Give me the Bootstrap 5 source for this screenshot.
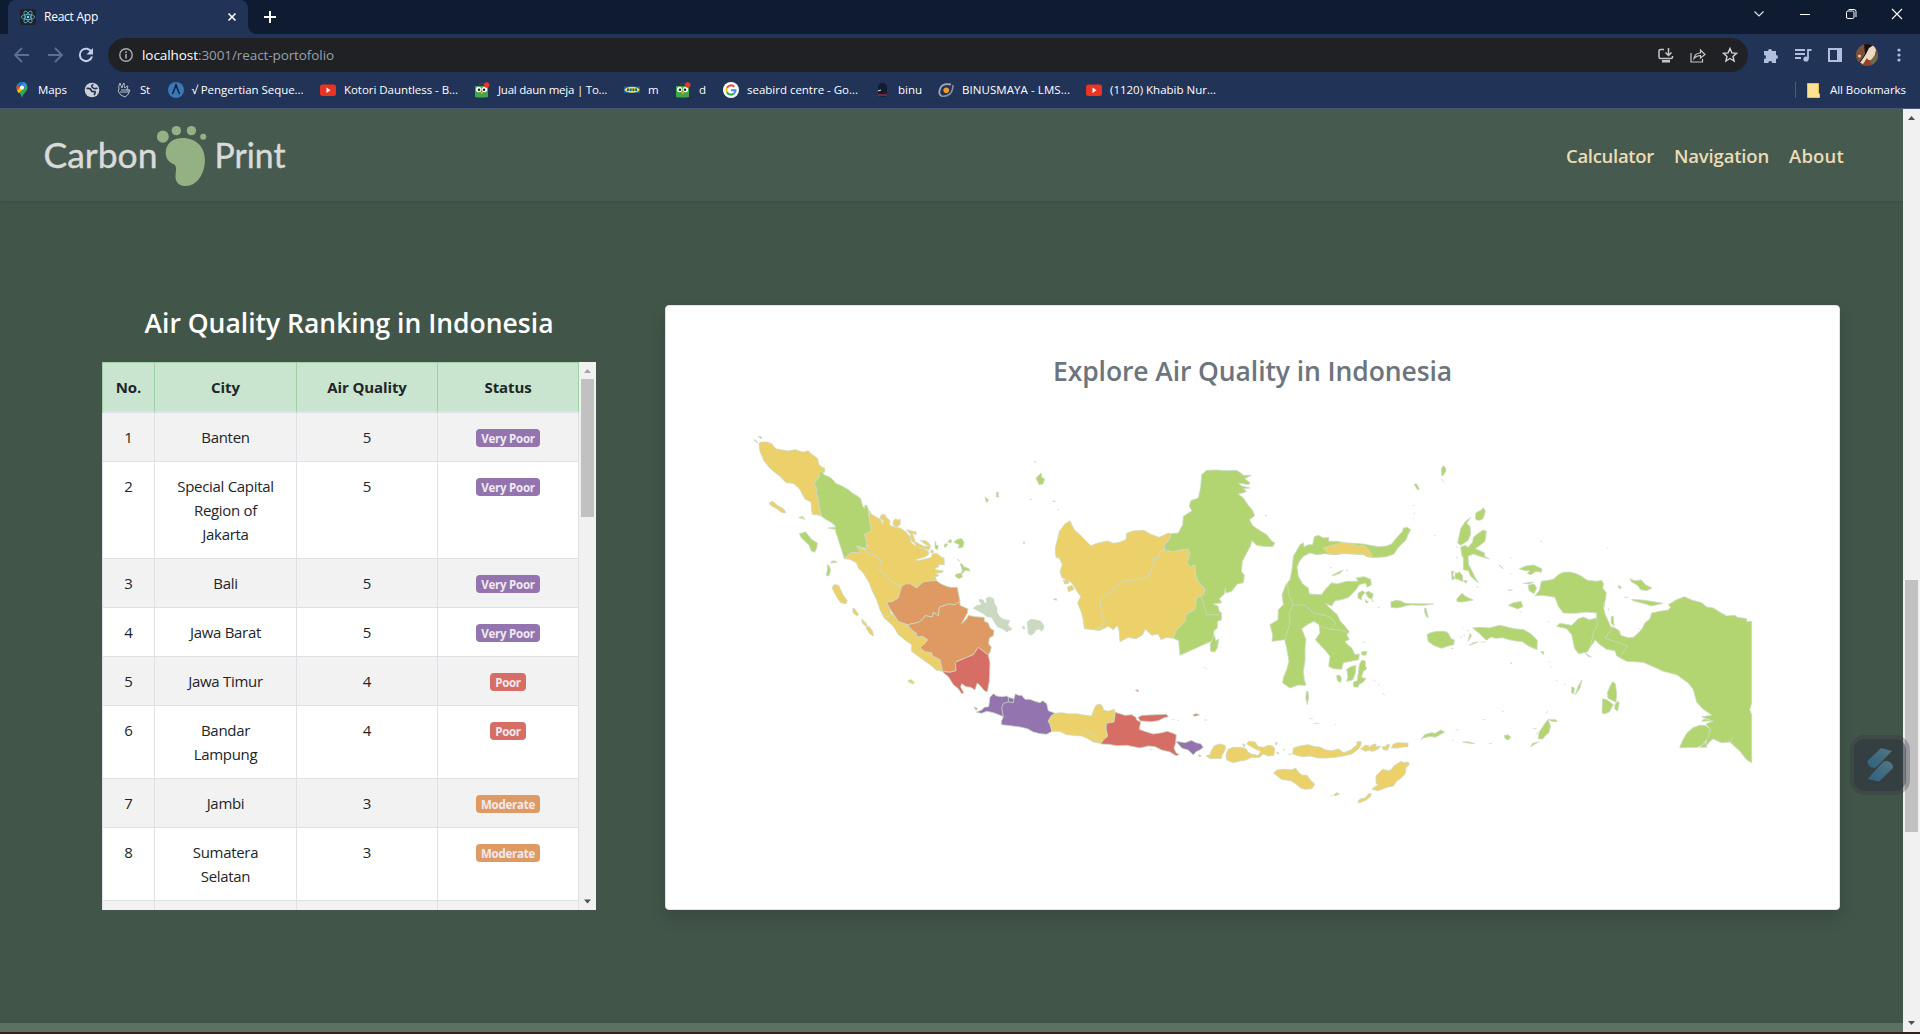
<!DOCTYPE html>
<html lang="en">
<head>
<meta charset="utf-8">
<meta name="viewport" content="width=device-width, initial-scale=1">
<title>React App</title>
<link rel="stylesheet" href="https://cdn.jsdelivr.net/npm/bootstrap@5.3.0/dist/css/bootstrap.min.css">
<script src="https://cdn.jsdelivr.net/npm/bootstrap@5.3.0/dist/js/bootstrap.bundle.min.js"></script>
<style>
body{font-family:"Open Sans","Noto Sans",sans-serif;height:1034px;overflow:hidden;background:#425549;color:#212529}
svg{display:block;flex:none}
[data-w]{white-space:nowrap;display:inline-block;flex:none}
.tabstrip{height:34px;background:#0f1b31;padding-left:8px}
.tab-on{width:240px;height:34px;background:#223358;border-radius:8px 8px 0 0;color:#fff;font-size:12px;padding:0 11px 0 12px}
.corner{width:8px;height:8px;background:radial-gradient(circle at 100% 0,#0f1b31 7.5px,#223358 8px)}
.win{padding-right:17px;gap:30px;height:28px}
.toolbar{height:38px;background:#223358;padding:4px 0 0 13px}
.reload{margin-left:13px}
.omni{width:1640px;height:34px;background:#202124;border-radius:17px;padding:0 10px 0 11px;margin-left:14px;color:#fff;font-size:13.5px}
.omni .dim{color:#9aa0a6}
.host{margin-left:9px}
.avatar{width:22px;height:22px;border-radius:50%;overflow:hidden;margin-left:14px}
.kebab{margin-left:19px}
.marks{height:37px;background:#223358;border-bottom:1px solid #4a577c;color:#fff;font-size:11.5px}
.marks .item{height:35px;flex:none}
.marks .ico{flex:none;width:16px}
.marks .sep{width:1px;height:16px;background:#4c5b80}
.folder{margin-left:11px}
.allmarks{margin:0 14px 0 10px}
.topnav{height:92px;background:#475a4f;box-shadow:0 1px 3px rgba(0,0,0,.12);padding:2px 59px 0 44px;gap:20px}
.topnav a{color:#ecdcb5;font-weight:600;font-size:18.5px;text-decoration:none}
.topnav svg{margin-top:-2px}
.content{padding:104px 63px 0 102px}
.rank{width:494px;padding-top:1px}
.page-title{font-size:26.5px;font-weight:600;line-height:34px}
.tablewrap{height:548px;overflow:hidden;margin-top:22px;background:#f1f1f1}
.rank-table{width:477px;table-layout:fixed;border-collapse:separate;border-spacing:0;border-left:1px solid #dee2e6;margin:0;font-size:15px;line-height:24px;text-align:center;background:#fff;color:#212529}
.rank-table td,.rank-table th{padding:12px;border:0 solid #dee2e6;border-width:0 1px 1px 0;letter-spacing:-.3px;vertical-align:top}
.rank-table th{background:#c9e5cf;border-color:#9fd0a6;border-top-width:1px;border-bottom:2px solid #dee2e6;padding:12px 4px;letter-spacing:-.1px}
.rank-table th:first-child{box-shadow:-1px 0 #9fd0a6}
.rank-table tr:nth-child(odd) td{background:#f2f2f2}
.pill{display:inline-block;height:18px;border-radius:4px;font-size:11.5px;font-weight:700;line-height:19px;color:#efeaf0;vertical-align:top;margin-top:4px;letter-spacing:-.25px;white-space:nowrap}
.vp{background:#9374ae;width:64px}.po{background:#d66e66;width:36px}.mo{background:#df9962;width:64px}
.vbar{width:17px;background:#f1f1f1}
.thumb{width:13px;background:#c1c1c1}
.thumb-list{height:138px}
.thumb-page{height:252px;margin-top:454px}
.mapcard{width:1175px;height:605px;border-radius:4px;border:1px solid #dfe3e0;box-shadow:0 8px 16px rgba(0,0,0,.15);color:#6c757d;padding-top:48px}
.map{margin-top:40px}
.map path{stroke:#cbd9c3;stroke-width:.8;vector-effect:non-scaling-stroke;stroke-linejoin:round}
.gy{fill:#ecd16a}.gg{fill:#b2d571}.go{fill:#df9962}.gr{fill:#d66e66}.gp{fill:#9374ae}.gn{fill:#cbd9c3}
.floater{position:absolute;left:1850px;top:735px;width:60px;height:60px;border-radius:15px;background:rgba(52,48,68,.3)}
.floater .core{width:52px;height:52px;border-radius:11px;background:rgba(40,52,60,.45)}
.floater svg{opacity:.85}
.foot{height:9px;background:#5b7261}
.edge{height:2px;background:#33221f}
</style>
</head>
<body class="d-flex flex-column">
<header class="flex-shrink-0">
 <div class="tabstrip d-flex">
  <div class="tab-on d-flex align-items-center">
   <svg width="16" height="16" viewBox="0 0 16 16"><rect width="16" height="16" rx="2" fill="#20232a"/><g fill="none" stroke="#61b9d0" stroke-width=".8"><ellipse cx="8" cy="8" rx="6.6" ry="2.6"/><ellipse cx="8" cy="8" rx="6.6" ry="2.6" transform="rotate(60 8 8)"/><ellipse cx="8" cy="8" rx="6.6" ry="2.6" transform="rotate(120 8 8)"/></g><circle cx="8" cy="8" r="1.3" fill="#61dafb"/></svg>
   <span class="ms-2" data-w="54">React App</span>
   <svg class="ms-auto" width="10" height="10" viewBox="0 0 10 10"><path d="M1.5 1.5l7 7M8.5 1.5l-7 7" stroke="#fff" stroke-width="1.6"/></svg>
  </div>
  <div class="corner align-self-end"></div>
  <svg class="align-self-center ms-2" width="12" height="12" viewBox="0 0 12 12"><path d="M6 0v12M0 6h12" stroke="#fff" stroke-width="2"/></svg>
  <div class="win d-flex align-items-center ms-auto">
   <svg width="12" height="8" viewBox="0 0 12 8"><path d="M1.5 1.5L6 6l4.500-4.500" fill="none" stroke="#e0e3ea" stroke-width="1.2"/></svg>
   <svg class="ms-1" width="12" height="8" viewBox="0 0 12 8"><path d="M1 4.500h10" stroke="#fff"/></svg>
   <svg class="ms-1" width="12" height="12" viewBox="0 0 12 12"><rect x="1.500" y="3" width="7.500" height="7.500" rx="1.500" fill="none" stroke="#fff"/><path d="M3.500 1.500h5.500q2 0 2 2v5.500" fill="none" stroke="#fff"/></svg>
   <svg class="ms-1" width="12" height="12" viewBox="0 0 12 12"><path d="M1 1l10 10M11 1L1 11" stroke="#fff" stroke-width="1.100"/></svg>
  </div>
 </div>
 <div class="toolbar d-flex align-items-center">
  <svg width="18" height="16" viewBox="0 0 18 16"><path d="M9 1L2 8l7 7M2 8h14" fill="none" stroke="#5e6e94" stroke-width="1.800"/></svg>
  <svg width="18" height="16" viewBox="0 0 18 16" class="ms-3"><path d="M8 1l7 7-7 7M15 8H1" fill="none" stroke="#5e6e94" stroke-width="1.800"/></svg>
  <svg width="16" height="16" viewBox="0 0 16 16" class="reload"><path d="M13.500 5A6.200 6.200 0 1 0 14 9.500" fill="none" stroke="#c1cfea" stroke-width="2"/><path d="M15 1v6.500H8.500z" fill="#c1cfea"/></svg>
  <div class="omni d-flex align-items-center">
   <svg width="14" height="14" viewBox="0 0 14 14"><circle cx="7" cy="7" r="6.200" fill="none" stroke="#a9adb2" stroke-width="1.400"/><path d="M7 6v4.500M7 3.300v1.600" stroke="#a9adb2" stroke-width="1.600"/></svg>
   <span data-w="56" class="host">localhost</span><span class="dim" data-w="136">:3001/react-portofolio</span>
   <svg class="ms-auto" width="16" height="15" viewBox="0 0 16 15"><g fill="none" stroke="#c4c7c5" stroke-width="1.500"><path d="M6 1.500H2.500q-1.500 0-1.500 1.500v6q0 1.500 1.500 1.500h10.500q1.500 0 1.500-1.500V8M10.500 0v7M7.500 4.500l3 3 3-3"/></g><path d="M4 12h8v2.500H4z" fill="#c4c7c5"/></svg>
   <svg class="ms-3" width="16" height="15" viewBox="0 0 16 15"><path d="M1 5v9h11.500v-3M4 10.500c.5-4 3-5.500 6.500-5.500V2L15 6.500 10.500 10V7.500C8 7.500 6 8 4 10.500z" fill="none" stroke="#c4c7c5" stroke-width="1.200"/></svg>
   <svg class="ms-3" width="16" height="16" viewBox="0 0 16 16"><path d="M8 1.500l1.900 4.400 4.700.4-3.600 3.100 1.100 4.600L8 11.500 3.900 14 5 9.400 1.400 6.300l4.700-.4z" fill="none" stroke="#d0d3d6" stroke-width="1.400"/></svg>
  </div>
  <svg class="ms-3" width="14" height="15" viewBox="0 0 14 15" fill="#b0bfdd"><path d="M0 3h4a2 2 0 1 1 4 0h4v4a2 2 0 1 1 0 4v4H8.300a2 2 0 0 0-4 0H0v-4a2 2 0 0 0 0-4z"/></svg>
  <svg class="ms-3" width="18" height="14" viewBox="0 0 18 14"><path d="M1 2h10M1 6h10M1 10h6M14 11V2h3.500" fill="none" stroke="#b0bfdd" stroke-width="1.800"/><circle cx="12" cy="11" r="2.600" fill="#b0bfdd"/></svg>
  <svg class="ms-3" width="14" height="14" viewBox="0 0 14 14"><path d="M1 1h12v12H1z" fill="none" stroke="#b0bfdd" stroke-width="2"/><path d="M9 1h4v12H9z" fill="#b0bfdd"/></svg>
  <svg class="avatar" width="22" height="22" viewBox="0 0 22 22"><path fill="#7d5138" d="M0 0h22v22H0z"/><path fill="#18120f" d="M8 0h8l-1 6-7 10-4 6H1l8-12z"/><path fill="#ead9c4" d="M13 4l5-3 2 5-2 8-5 3-2-3-4 6-3-1 6-9z"/><path fill="#a33a22" d="M10 16l4 0-2 6H9z"/><path fill="#6f6a4a" d="M18 12l4-2v8l-5 3-3-3z"/><circle cx="3.500" cy="12" r="1.600" fill="#d8c5ac"/></svg>
  <svg class="kebab" width="4" height="14" viewBox="0 0 4 14" fill="#b0bfdd"><circle cx="2" cy="2" r="1.600"/><circle cx="2" cy="7" r="1.600"/><circle cx="2" cy="12" r="1.600"/></svg>
 </div>
 <div class="marks d-flex align-items-center" id="marks"></div>
</header>

<div class="d-flex flex-grow-1">
 <main class="flex-grow-1 d-flex flex-column">
  <nav class="topnav d-flex align-items-center">
   <svg class="me-auto" width="245" height="66" viewBox="44 122 245 66">
    <g font-family="Lato,sans-serif" font-size="34.500" fill="#d9dad9" stroke="#d9dad9" stroke-width=".4"><text x="43.500" y="168" textLength="114" lengthAdjust="spacingAndGlyphs">Carbon</text><text x="214.500" y="168" textLength="71" lengthAdjust="spacingAndGlyphs">Print</text></g>
    <g fill="#94b183" transform="scale(.40816 .33333)"><ellipse cx="399" cy="410" rx="14.500" ry="18.500"/><ellipse cx="432" cy="392" rx="11.500" ry="14"/><ellipse cx="469" cy="392" rx="11.500" ry="14"/><ellipse cx="498" cy="410" rx="7.500" ry="9"/><path d="M447 414C480 414 502 440 502 480C502 522 482 558 455 558C438 558 430 545 430 530C430 515 435 500 426 493C414 487 406 475 406 458C406 432 423 414 447 414Z"/></g>
   </svg>
   <a href="#" data-w="88">Calculator</a><a href="#" data-w="95">Navigation</a><a href="#" data-w="55">About</a>
  </nav>
  <div class="content d-flex justify-content-between flex-grow-1">
   <section class="rank">
    <h1 class="page-title text-white text-center mb-0"><span data-w="409">Air Quality Ranking in Indonesia</span></h1>
    <div class="tablewrap d-flex">
     <div>
     <table class="rank-table">
      <colgroup><col style="width:52px"><col style="width:142px"><col style="width:141px"><col style="width:141px"></colgroup>
      <thead><tr><th>No.</th><th>City</th><th>Air Quality</th><th>Status</th></tr></thead>
      <tbody>
       <tr><td>1</td><td>Banten</td><td>5</td><td><span class="pill vp">Very Poor</span></td></tr>
       <tr><td>2</td><td>Special Capital<br>Region of<br>Jakarta</td><td>5</td><td><span class="pill vp">Very Poor</span></td></tr>
       <tr><td>3</td><td>Bali</td><td>5</td><td><span class="pill vp">Very Poor</span></td></tr>
       <tr><td>4</td><td>Jawa Barat</td><td>5</td><td><span class="pill vp">Very Poor</span></td></tr>
       <tr><td>5</td><td>Jawa Timur</td><td>4</td><td><span class="pill po">Poor</span></td></tr>
       <tr><td>6</td><td>Bandar<br>Lampung</td><td>4</td><td><span class="pill po">Poor</span></td></tr>
       <tr><td>7</td><td>Jambi</td><td>3</td><td><span class="pill mo">Moderate</span></td></tr>
       <tr><td>8</td><td>Sumatera<br>Selatan</td><td>3</td><td><span class="pill mo">Moderate</span></td></tr>
       <tr><td>&nbsp;</td><td></td><td></td><td></td></tr>
      </tbody>
     </table>
     </div>
     <div class="vbar d-flex flex-column align-items-center">
      <svg width="17" height="17" viewBox="0 0 17 17"><path d="M5 11l3.500-4 3.500 4z" fill="#a3a3a3"/></svg>
      <div class="thumb thumb-list"></div>
      <svg class="mt-auto" width="17" height="17" viewBox="0 0 17 17"><path d="M5 6.500l3.500 4 3.500-4z" fill="#505050"/></svg>
     </div>
    </div>
   </section>
   <section class="mapcard bg-white d-flex flex-column align-items-center">
    <h2 class="page-title mb-0"><span data-w="399">Explore Air Quality in Indonesia</span></h2>
    <svg class="map" width="1015" height="380" viewBox="745 430 1015 380">
     <g transform="translate(740 420) scale(.33333)">
      <path class="gy" d="M57 76L66 72 82 72 95 77 103 88 110 93 128 96 145 99 165 95 178 99 190 103 205 98 213 107 220 112 228 118 233 122 237 140 245 147 255 152 253 163 240 160 236 180 222 196 232 215 229 225 235 240 237 262 245 295 232 290 218 290 215 278 213 252 195 243 188 230 180 215 172 206 160 196 138 194 120 175 100 160 86 146 72 128 64 110 60 100Z"/>
      <path class="gg" d="M240 160L246 160 252 170 270 178 280 187 287 196 310 206 325 215 338 226 352 234 362 242 368 265 374 272 374 262 380 262 385 275 388 305 395 338 373 350 381 375 379 392 350 384 362 405 345 403 330 405 313 422 308 405 300 380 292 355 288 345 285 322 276 315 268 310 255 303 245 295 237 262 235 240 229 225 232 215 222 196 236 180Z"/>
      <path class="gy" d="M388 278L396 290 410 298 422 304 428 320 430 308 420 300 424 290 435 290 440 300 450 308 449 322 465 328 480 330 495 340 505 350 512 358 512 372 530 388 550 392 565 400 567 408 555 417 525 425 535 428 560 422 575 418 577 408 590 406 605 418 612 420 613 440 595 439 597 446 586 449 585 455 610 459 606 464 585 466 598 473 586 476 590 488 570 489 550 492 530 510 510 497 485 505 460 495 440 475 415 450 422 425 398 410 385 412 375 395 379 392 381 375 373 350 395 338 388 305Z"/>
      <path class="gy" d="M461 308l6 -6 5 4 8 -2 1 14 -8 8 -9 -1 -6 -8zM499 335l29 7 1 8 -12 -4 7 20 2 12 -12 -10 -3 -20zM527 372l22 12 22 2 -4 10 -20 -6 -20 -2zM541 368l16 0 10 8 5 10 -14 -6zM573 395l7 3 0 7 -8 -1z"/>
      <path class="gy" d="M313 422L330 405 345 403 362 405 350 384 375 395 385 412 398 410 422 425 421 440 415 450 440 475 460 495 485 505 475 540 455 552 440 552 455 590 433 600 420 575 410 545 395 515 390 500 385 490 370 465 355 450 350 435 330 424Z"/>
      <path class="gy" d="M433 600L460 588 475 610 500 620 515 630 520 640 530 647 530 656 548 655 563 665 558 673 540 690 555 701 575 704 577 713 600 725 608 760 590 757 570 740 545 722 515 700 515 680 498 668 475 650 460 625Z"/>
      <path class="go" d="M485 505L497 498 510 497 530 510 550 492 570 489 590 488 602 497 615 503 630 508 652 508 656 530 660 550 645 560 625 558 598 568 595 594 584 585 580 583 577 597 555 593 550 602 535 613 503 620 475 610 460 588 448 570 440 552 455 552 475 540Z"/>
      <path class="go" d="M503 620L535 613 550 602 555 593 577 597 580 583 595 594 598 568 625 558 645 560 660 550 660 562 684 573 682 585 674 600 665 617 680 602 685 592 705 596 733 598 733 610 745 615 750 630 762 638 760 653 748 660 746 678 754 688 750 703 745 711 730 700 715 688 700 710 680 718 650 730 648 758 630 763 608 760 600 725 577 713 575 704 555 701 540 690 558 673 563 665 548 655 530 656 530 647 515 635Z"/>
      <path class="gr" d="M606 760L630 763 648 758 646 733 680 718 700 710 715 688 730 700 745 711 750 735 748 790 742 822 733 818 722 805 712 795 705 816 692 808 678 806 665 797 662 807 672 826 664 826 655 812 640 800 625 776Z"/>
      <path class="gn" d="M700 571l10 -8 18 -4 -10 -8 0 -8 12 4 3 8 8 0 -2 -14 10 -4 12 6 2 14 8 12 0 15 8 12 10 8 20 4 -6 12 10 12 -12 10 -10 -8 -18 -8 -10 -14 -8 -14 -14 -2 -12 -10zM862 612l10 -8 16 2 14 4 7 8 3 12 -8 10 -5 -7 -12 2 -4 10 -10 6 -8 -4zM848 624l5 2 1 6 -5 0zM810 630l5 2 -4 6z"/>
      <path class="gy" d="M88 254l10 -4 14 12 18 10 8 12 -12 0 -16 -12 -18 -10zM176 299l12 -4 6 9 -6 -2zM276 510l6 -10 14 2 6 14 8 16 12 16 -4 9 -16 -3 -10 -14zM338 572l6 0 12 18 -6 3 -10 -8zM365 604l12 10 4 8 -6 2 -8 -10zM380 624l8 2 10 14 2 14 -10 -6 -12 -18zM505 787l8 -2 10 8 -4 5 -13 -6zM42 65l8 4 3 5 -6 -3zM55 55l9 1 1 6 -6 -2z"/>
      <path class="gg" d="M178 347l10 -2 8 -4 8 10 12 14 16 10 -2 16 -6 12 -10 -4 -6 -16 -14 -14 -10 -10zM264 330l22 -2 0 6zM272 432l10 -4 10 4 -18 3zM262 440l6 4 4 14 -6 16 -8 -2 4 -14zM585 370l4 4 -4 5 10 5 -3 12 -7 -6zM612 382l7 -6 4 4 -8 9zM623 372l8 -8 5 5 -4 6zM642 372l10 -8 14 -2 6 12 -4 14 -14 2 4 -10 -10 -4zM652 424l7 5zM661 438l4 -1 8 10 12 4 6 8 -16 -2 -6 8 -4 2 2 10 -10 5 -12 -8 4 -6 14 -2 4 -9zM735 238l6 3 5 6 -6 7zM770 222l6 2 -2 8 2 5 -7 0zM850 372h4v4h-4zM884 132h4M870 244h4"/>
     </g>
     <g transform="translate(1030 450) scale(.33333)">
      <path class="gy" d="M105 228L114 222 120 218 126 232 134 247 150 260 165 276 182 293 205 285 232 279 250 286 268 283 288 275 290 256 310 249 342 247 362 259 387 268 415 255 423 258 421 271 404 290 404 306 390 312 385 332 366 334 374 352 362 368 360 382 325 396 285 397 258 415 240 435 215 450 210 457 215 492 224 523 210 540 190 545 163 542 160 515 153 490 143 465 152 446 140 428 126 405 95 388 90 370 97 350 88 330 78 328 76 300 83 272 88 250Z"/>
      <path class="gy" d="M404 306L430 311 460 304 475 303 479 320 472 345 480 357 495 350 497 378 504 400 526 424 520 440 500 450 495 484 468 500 466 520 440 545 430 571 410 568 393 575 385 558 365 562 346 543 338 560 318 573 295 568 270 581 268 550 262 532 250 545 235 535 210 547 195 547 210 540 224 523 215 492 210 457 215 450 240 435 258 415 285 397 325 396 360 382 362 368 374 352 366 334 385 332 390 312Z"/>
      <path class="gg" d="M530 67L560 66 590 68 620 67 632 75 640 82 664 82 644 92 660 104 656 110 625 105 635 114 660 120 640 122 650 130 640 134 625 138 640 150 652 168 668 188 674 203 658 215 668 233 690 248 710 260 724 278 735 285 728 296 700 295 680 292 666 278 660 297 650 315 637 340 634 370 643 382 640 404 622 408 605 430 588 435 586 420 583 438 568 452 575 464 550 468 564 475 568 490 575 495 574 516 562 520 562 540 552 548 548 578 520 590 490 604 450 622 446 578 430 571 440 545 466 520 468 500 495 484 500 450 520 440 526 424 504 400 497 378 495 350 480 357 472 345 479 320 475 303 460 304 430 311 404 306 404 290 421 271 423 257 445 255 458 230 460 205 486 188 478 175 482 158 505 150 512 118 515 80Z"/>
      <path fill="none" d="M513 444L520 465 530 500 575 500"/>
      <path class="gg" d="M541 588l12 -28 4 18 9 -4 -4 26 -8 12 -12 -2zM520 658h4M527 662h4M705 201l5 3zM18 90l16 -15 0 12 10 6 -5 15 -12 2zM68 160l8 0zM82 185h5M12 42h6M0 154h5"/>
      <path class="gy" d="M100 396l14 2 2 8 -12 2zM112 418l14 -6 6 12 -16 7zM70 454l8 -3 2 6z"/>
     </g>
     <g transform="translate(940 670) scale(.33333)">
      <path class="gp" d="M108 133L125 126 133 118 146 116 150 88 160 77 170 84 185 86 200 84 206 88 222 92 226 77 235 82 245 82 255 94 270 94 285 100 300 104 308 98 320 107 325 128 345 136 333 145 325 160 330 168 336 190 320 199 300 197 280 192 262 182 240 177 210 173 184 170 184 160 190 146 176 140 160 134 140 130 125 136Z"/>
      <path fill="none" d="M190 146L185 120 190 106 205 102 205 86M205 102L220 104 222 90"/>
      <path class="gp" d="M102 118l10 3 -3 6zM708 220l14 2 14 2 18 -7 14 7 14 3 8 11 -12 9 -10 4 -8 10 -8 -8 -8 -7 -18 -5zM775 260l8 3 -3 4z"/>
      <path class="gy" d="M345 136L365 134 385 138 410 137 435 142 455 144 462 124 468 112 480 108 488 115 490 126 505 130 522 124 526 133 522 162 500 166 498 180 503 205 482 226 460 222 440 210 425 204 400 202 380 200 360 190 336 190 330 168 325 160 333 145Z"/>
      <path fill="none" d="M425 200L432 192 444 186 450 198 464 200 470 218"/>
      <path class="gr" d="M526 133L540 137 555 142 575 140 588 148 590 156 602 162 598 184 620 192 640 198 665 194 682 190 695 194 709 200 707 225 702 240 708 254 718 260 708 263 690 252 665 246 645 236 625 234 600 240 580 236 560 232 530 233 505 229 482 228 490 216 503 205 498 180 500 166 522 162Z"/>
      <path class="gr" d="M594 148l12 -6 40 -2 34 -1 5 7 -14 4 -16 8 -20 3 -34 -2zM586 67l8 -2 1 7zM759 140l10 -3 10 4 -16 4zM697 154l6 2M712 157h5M792 156h10M630 244l8 0"/>
      <path class="gy" d="M798 264l12 -4 4 -12 8 -14 15 -6 18 4 2 10 -10 18 -4 12 -18 -1 -14 1zM858 262L864 244 880 238 900 238 918 242 924 252 936 259 955 262 962 250 948 244 934 236 920 228 926 220 945 222 955 236 970 238 985 232 998 234 1004 242 1002 262 985 264 970 258 958 268 935 268 918 276 900 279 880 284 860 276ZM908 228l8 2 -4 8zM1006 222l6 4 -4 6zM1010 252l6 2 -2 5zM1030 242l4 6zM1046 258l8 2zM1058 258L1060 240 1080 234 1105 230 1125 236 1140 237 1158 246 1175 248 1195 243 1212 254 1232 246 1250 232 1252 220 1264 222 1262 234 1252 246 1235 258 1210 264 1185 268 1160 270 1135 270 1110 264 1085 266ZM1262 242l14 -10 10 0 -2 8 14 -10 10 -2 0 8 14 -2 -6 8 -12 6 -10 2 -6 -4 -12 4zM1326 236l10 0 6 -7 8 2 -8 16 -12 -2zM1354 240l6 -12 14 -4 16 1 14 0 0 11 -16 1 -14 3z"/>
      <path class="gy" d="M1001 315l10 -9 24 -2 20 2 12 -6 10 14 10 8 14 0 10 14 13 12 -8 14 -20 2 -14 -4 -14 -12 -16 -10 -14 -2 -14 -2zM1308 344l0 -20 20 -20 16 4 8 -2 12 -14 20 -12 6 4 14 -2 4 8 -10 8 -2 18 -10 12 -16 12 -10 14 -18 4 -28 10 -18 -4 8 -8 10 -4zM1255 398l8 -6 12 -2 10 -12 8 -2 0 8 -14 12 -14 6 -10 3zM1172 385l6 -3M1182 380l8 -6 9 4 -14 6z"/>
     </g>
     <g transform="translate(1250 450) scale(.33333)">
      <path class="gg" d="M120 395L125 370 128 348 130 325 140 308 150 290 160 284 162 297 175 290 188 290 193 266 205 262 220 270 236 268 236 280 260 280 285 284 310 286 340 288 360 292 385 296 410 294 425 288 436 274 448 260 458 250 460 240 472 238 482 245 474 260 468 276 455 288 442 302 432 318 410 326 370 329 340 320 310 318 280 316 255 320 225 317 200 320 180 315 160 325 148 340 141 358 145 385 158 408 175 420 178 438 215 440 225 425 245 404 260 408 290 400 325 400 318 390 342 386 362 394 364 410 352 418 347 405 328 410 318 425 296 448 275 455 255 458 245 474 225 466 245 485 262 500 270 518 285 535 298 552 290 560 298 575 285 580 290 588 305 600 315 620 328 618 326 635 310 638 280 644 275 664 250 662 236 655 240 625 228 610 196 575 210 555 207 530 192 520 175 528 155 542 160 555 168 575 165 600 165 640 160 670 163 695 168 712 145 711 120 720 98 705 100 690 110 665 117 640 110 600 104 575 66 580 68 560 60 530 84 515 85 485 100 470 96 440 108 410Z"/>
      <path class="gy" d="M218 300L240 294 270 286 300 286 326 295 338 290 355 302 368 328 350 326 340 318 310 318 280 316 255 320 235 316Z"/>
      <path fill="none" d="M112 405L116 440 130 470 118 495 120 530 108 560 106 575M130 470L165 472 190 495 225 502 245 510 257 528 240 544 212 535M240 544L275 546 298 556"/>
      <path class="gg" d="M324 436l14 -8 6 6 -8 10 -2 12 -10 -6zM346 434l10 -4 14 8 -4 14 -10 -2zM345 454l10 8 -6 4zM364 452l6 10zM246 382l20 -10 14 -6 -10 10 -20 7zM240 359h6M288 367h6M382 480l8 -3M290 664l12 -8 16 -4 -2 24 -8 20 -18 4 4 -14zM328 650l8 -14 10 4 0 14 4 8 -10 8 -6 18 14 4 -10 12 -10 4 -4 10 -14 -2 0 -14 12 -4zM260 682l10 0 4 10 -2 12 -10 -6zM334 612l16 -2 -2 12 -12 -1zM340 582h6M170 730l4 0 2 18 -4 22 -5 -20zM370 695l6 4M384 708l4 5M398 735l6 7M178 812h10M192 826h16M254 830h4M423 462l14 -5 16 2 10 6 20 2 24 0 44 1 -30 4 -40 -1 -14 2 -10 4 -18 3 -16 -2zM524 480l5 2 2 12 4 14 -5 -1 -6 -14zM531 560l10 -6 20 -4 24 0 10 6 8 16 10 4 -2 14 -16 4 -20 7 -22 -8 -18 -12zM604 601l6 0zM574 62l6 -9 6 6 2 10 -8 12 -4 4zM574 92l8 12M492 108l8 0 8 16 -5 2zM490 172h4M491 196h4M488 212h2"/>
      <path class="gg" d="M676 212l2 -18 16 -8 6 -7 6 10 -6 22 -10 6 -10 -1zM662 208L645 222 632 242 628 262 623 284 632 292 642 286 655 276 662 258 660 235 650 226ZM632 298L636 325 640 328 640 365 655 368 662 385 685 405 675 388 664 365 656 350 654 325 670 318 700 328 718 333 704 325 704 315 676 302 690 292 705 280 709 250 700 246 685 256 670 268 668 282 655 298 645 292ZM604 370l8 0 -4 10 6 12 -8 4zM616 374l8 2 4 -5 10 12 0 18 -12 -6 -12 -4zM640 398l12 0 -4 8zM620 454l6 -8 10 -10 12 10 22 10 -20 4 -14 2 -14 -1zM620 295l3 5M621 325v8M668 540l20 -2 30 2 30 -8 20 4 24 6 30 3 20 12 20 20 -1 28 -24 -10 -20 -14 -20 -2 -20 -4 -20 -6 -20 2 -14 -4 -14 10 -10 -10 -8 -8zM650 548h8M654 580l6 -24 4 8zM658 592l12 -8 14 -2 -12 5zM692 582h14M630 568h6M640 562h6M514 874l10 -14 20 -6 12 2 16 -10 12 6 -14 8 -14 8 -14 -3 -20 4zM618 846h8M606 878h4M638 882l16 -1 20 6 -20 -2zM716 886h10M697 815h8M762 866l12 -6 8 8 -12 6zM745 350l14 12M774 427h12M552 263h4M782 645h4M756 790h4M679 415l7 3M638 540h3"/>
     </g>
     <g transform="translate(1500 540) scale(.33333)">
      <path class="gg" d="M124 130L145 127 160 124 175 110 190 103 210 102 225 106 240 112 262 127 290 130 305 127 311 138 308 150 319 165 316 185 310 205 315 228 325 250 332 266 345 270 358 278 362 292 385 299 400 298 415 285 428 270 434 256 450 242 455 225 480 220 505 216 512 208 505 200 530 185 553 176 575 186 605 194 620 207 640 210 660 223 680 234 705 232 712 238 740 242 740 251 755 250 755 495 749 515 755 530 755 674 740 665 720 640 690 612 665 614 640 603 630 610 618 625 620 600 632 575 618 558 640 548 605 550 612 543 636 548 605 536 636 532 608 512 590 492 580 455 565 435 530 410 490 400 455 384 430 373 380 370 350 354 345 338 320 334 300 320 285 305 280 315 270 328 262 342 236 347 224 332 215 290 200 272 170 265 180 256 215 262 235 242 250 237 268 245 290 240 290 225 260 222 225 226 190 225 175 205 165 178 130 172 105 173 118 158Z"/>
      <path fill="none" d="M338 268L315 300 383 324 360 357M270 330L282 278 292 262M690 612L700 596M290 240L292 262"/>
      <path class="gg" d="M539 629l10 -24 12 -20 18 -16 20 -7 16 0 16 12 -6 24 -18 22 -14 8zM600 628l16 -16 4 16zM84 142l18 -4 8 12 -8 17 -14 -8zM70 136l30 -4 -10 6zM58 92l20 -8 24 -3 24 12 -2 10 -16 -3 -16 10 -10 -4 8 -8 -16 0zM25 202l16 -8 22 -4 6 16 -16 7zM24 156h14M390 122l14 6 20 -2 12 14 20 10 -16 8 -18 -3 -8 -12 -20 -12zM355 142l8 4 0 6 -7 -2zM372 178h14M395 184l40 3 54 9 -34 8 -26 -8 -30 -8zM334 235l6 0 2 30 -9 -10zM310 195l4 0 -2 14zM324 210l3 8M322 465l8 -20 8 -14 8 6 4 30 -2 26 -24 -12zM308 482l14 4 18 14 -12 22 -16 6 -6 -4zM345 500l8 -10 5 4 -6 26 -8 -8zM215 446l8 4 -2 18 -6 -3zM246 426l-6 24 -14 20 8 -24zM114 602l4 -20 14 -22 12 -15 8 20 -6 20 -10 8 -8 10zM144 545l24 0 4 6 -16 -1zM98 572h12M108 588l12 -6M92 626l6 -10 18 -4 -14 8zM12 592l10 0 9 4 -4 10 -10 -4zM138 526l6 -8M122 340l10 2 -2 8zM256 346l18 11 -10 -2zM146 370l4 4M153 385v4M168 428h4M192 440h4M414 272h4M608 184h2M32 108h4M31 60h4M0 82l11 10M60 222h4M144 251h4M30 376h6M6 520h4M120 10h5M321 31h3"/>
     </g>
    </svg>
   </section>
  </div>
  <div class="foot"></div>
 </main>
 <div class="vbar d-flex flex-column align-items-center">
  <svg width="17" height="17" viewBox="0 0 17 17"><path d="M5 11l3.500-4 3.500 4z" fill="#505050"/></svg>
  <div class="thumb thumb-page"></div>
  <svg class="mt-auto" width="17" height="17" viewBox="0 0 17 17"><path d="M5 6l3.500 4 3.500-4z" fill="#505050"/></svg>
 </div>
</div>
<div class="edge flex-shrink-0"></div>
<div class="floater d-flex align-items-center justify-content-center"><div class="core d-flex align-items-center justify-content-center">
 <svg width="26" height="34" viewBox="0 0 26 34"><defs><linearGradient id="s1" x1="0" y1="1" x2="1" y2="0"><stop offset="0" stop-color="#2f668c"/><stop offset="1" stop-color="#56828a"/></linearGradient></defs><g fill="url(#s1)"><path d="M14 0l11 3L9 19.500Q4 21 1.500 17T2 11.500z"/><path d="M12 33.500L.500 31 16 14q5-2.500 8.500 1.500T24 22z"/></g></svg>
</div></div>

<script>
const yt='<rect y="2.500" width="16" height="11.500" rx="2.500" fill="#ea3323"/><path d="M6.500 5.500v5.500l4-2.700z" fill="#fff"/>';
const owl='<path d="M1 4h13v11q-7 1-13 0z" fill="#42a846"/><path d="M5 3q3-4 5 0" fill="none" stroke="#444" stroke-width="1.200"/><circle cx="4.700" cy="7.500" r="2.700" fill="#fff"/><circle cx="10.500" cy="7.500" r="2.700" fill="#fff"/><circle cx="5" cy="7.700" r="1.300" fill="#222"/><circle cx="10" cy="7.700" r="1.300" fill="#222"/><path d="M6.500 10h2.500l-1.200 2.500z" fill="#f3b52c"/><circle cx="12.700" cy="3" r="2.800" fill="#e23a2a"/>';
/* icon x, label width, label, icon */
const marks=[
 [14,29,'Maps','<path d="M8 0a5.500 5.500 0 0 0-5.500 5.500c0 4 4.500 5.500 5.500 10.500 1-5 5.500-6.500 5.500-10.500A5.500 5.500 0 0 0 8 0z" fill="#34a853"/><path d="M8 0a5.500 5.500 0 0 1 5 3L9 7z" fill="#4285f4"/><path d="M3.500 2.500A5.500 5.500 0 0 1 8 0l2 .5-4.500 5z" fill="#1a73e8"/><path d="M3.500 2.500L6 5.500 3.500 9Q1.500 5 3.500 2.500z" fill="#ea4335"/><path d="M9.500 7L4.500 11 3 8.500l4-4z" fill="#fbbc04"/><circle cx="8" cy="5.500" r="2" fill="#fff"/>'],
 [84,0,'','<circle cx="8" cy="8" r="7.300" fill="#cdd0d4"/><path d="M2.500 6.500q4-.5 4.500 1.500t3 1.500 0 3.500M9.500 2.500q-3 1-1 3t5 .5" fill="none" stroke="#223358" stroke-width="1.600"/>'],
 [116,10,'St','<g fill="none" stroke="#b8bcc6" stroke-width="1"><path d="M3 8Q2 4 4 1q1 3 2 5 0-3 2-5 0 4 1 5 1-2 3-2-1 2-1 4h3q-1 5-5 7-5-1-7-6z"/><path d="M4 10h9M5 8h8"/></g>'],
 [167.500,112,'√ Pengertian Seque...','<circle cx="8" cy="8" r="8" fill="#3a78b8"/><path d="M4.500 12L8 3l3.500 9" fill="none" stroke="#12243d" stroke-width="1.600"/>'],
 [320,114,'Kotori Dauntless - B...',yt],
 [474,109,'Jual daun meja | To...',owl],
 [624,10,'m','<rect y="4.500" width="16" height="6.500" fill="#1860a8"/><ellipse cx="8" cy="7.750" rx="7.500" ry="3" fill="#f7dc2b"/><path d="M3 7.750h10" stroke="#1860a8" stroke-width="2.400" stroke-dasharray="2 .7"/>'],
 [675,7,'d',owl],
 [723,111,'seabird centre - Go...','<circle cx="8" cy="8" r="8" fill="#fff"/><g fill="none" stroke-width="2"><path d="M11.300 4.700A4.600 4.600 0 0 0 4 5.800" stroke="#ea4335"/><path d="M4 5.800a4.600 4.600 0 0 0 0 4.400" stroke="#fbbc05"/><path d="M4 10.200a4.600 4.600 0 0 0 7 1.400" stroke="#34a853"/><path d="M11 11.500a4.600 4.600 0 0 0 1.600-3.300H8" stroke="#4285f4"/></g>'],
 [874,24,'binu','<path d="M4 6q0-5 4.500-5T13 6v8l-4 1-5-1z" fill="#141c30"/><path d="M4 9l3-1" stroke="#d8d8e0" stroke-width="1.300"/><path d="M4 13h9" stroke="#a8323a" stroke-width="1.300"/>'],
 [938,108,'BINUSMAYA - LMS...','<path d="M13 2.500Q4 1 2 7t2 7" fill="none" stroke="#a4a7ad" stroke-width="1.800"/><path d="M15 3q0 7-4 9.500T3 14" fill="none" stroke="#8c9098" stroke-width="1.600"/><circle cx="8.300" cy="8.300" r="2.800" fill="#f09a2c"/>'],
 [1086,106,'(1120) Khabib Nur...',yt]];
let html='',x=0;
for(const [ix,w,t,ic] of marks){
 html+=`<div class="item d-flex align-items-center" style="margin-left:${ix-x}px"><svg class="ico" width="16" height="16" viewBox="0 0 16 16">${ic}</svg>${w?`<span class="ms-2" data-w="${w}">${t}</span>`:''}</div>`;
 x=ix+(w?24+w:16);
}
html+='<div class="sep ms-auto"></div><svg class="folder" width="13" height="15" viewBox="0 0 13 15"><path d="M.500.500h11v9.500l1 1v3.500H.500z" fill="#fbe292" stroke="#e8c547"/></svg><span class="allmarks" data-w="76">All Bookmarks</span>';
document.getElementById('marks').innerHTML=html;
/* Tracks each label so that it fills its measured width */
for(const el of document.querySelectorAll('[data-w]')){
 const w=+el.dataset.w,n=el.textContent.length;
 el.style.letterSpacing=(w-el.getBoundingClientRect().width)/n+'px';
}
</script>
</body>
</html>
